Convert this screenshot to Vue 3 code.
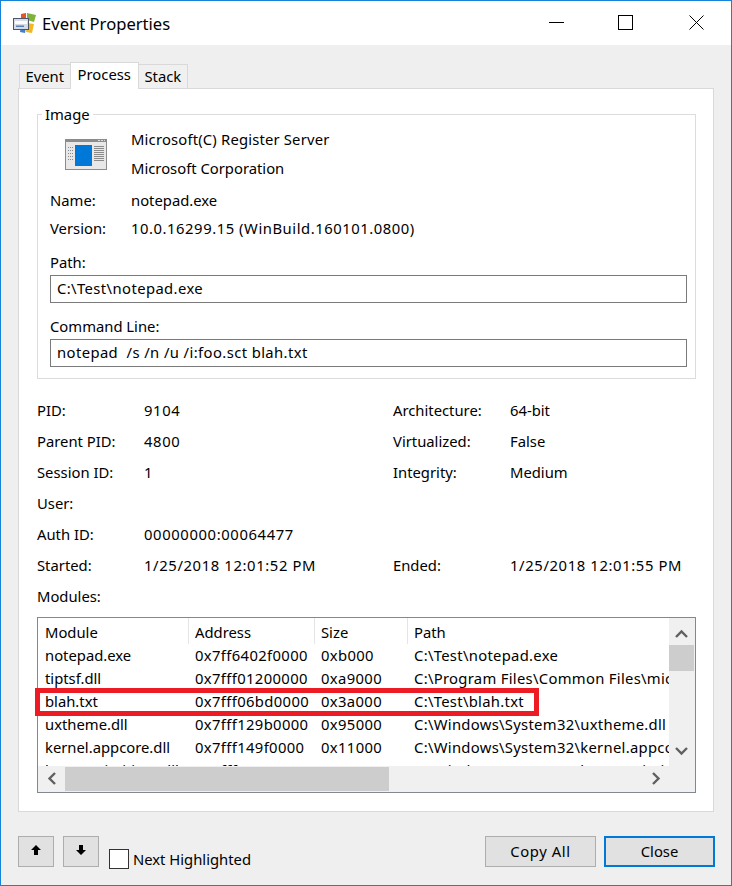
<template>
  <div class="window">
    <div class="titlebar">
      <svg class="app-icon" width="25" height="22" viewBox="0 0 25 22">
        <path d="M9 2 L14 1 L14 8 L9 9 Z" fill="#e2562b" />
        <path d="M15 1 L24 3 L22 10 L15 8 Z" fill="#7fb23a" />
        <path d="M9 13 L14 14 L13 21 L8 20 Z" fill="#3f7fd0" />
        <path d="M15 11 L22 12 L20 21 L14 20 Z" fill="#f2b824" />
        <rect x="1.5" y="6.5" width="15" height="11" fill="#d6dbe6" stroke="#4d5568" />
        <rect x="3" y="9" width="12" height="3" fill="#fff" />
        <rect x="4" y="13.5" width="8" height="1.5" fill="#5a7fb5" />
      </svg>
      <span class="title">Event Properties</span>
      <div class="controls">
        <button class="ctl">
          <svg width="15" height="15" viewBox="0 0 15 15"><path d="M0 7.5 H15" stroke="#000" /></svg>
        </button>
        <button class="ctl">
          <svg width="15" height="15" viewBox="0 0 15 15"><rect x="0.5" y="0.5" width="14" height="14" fill="none" stroke="#000" stroke-width="1" /></svg>
        </button>
        <button class="ctl">
          <svg width="15" height="15" viewBox="0 0 15 15"><path d="M0.5 0.5 L14.5 14.5 M14.5 0.5 L0.5 14.5" stroke="#000" stroke-width="1" /></svg>
        </button>
      </div>
    </div>

    <div class="tabs">
      <div v-for="t in tabs" :key="t" class="tab" :class="{ active: t === 'Process' }">{{ t }}</div>
    </div>

    <div class="panel">
      <fieldset class="group">
        <legend>Image</legend>
        <div class="image-head">
          <svg class="exe-icon" width="42" height="32" viewBox="0 0 42 32">
            <rect x="0" y="0" width="42" height="31" fill="#8c8c8c" />
            <rect x="1" y="3" width="40" height="27" fill="#e8e8e8" />
            <rect x="33" y="1" width="2" height="1" fill="#ddd" />
            <rect x="36" y="1" width="2" height="1" fill="#ddd" />
            <rect x="39" y="1" width="1" height="1" fill="#ddd" />
            <rect x="10" y="6" width="17" height="21" fill="#0078d7" />
            <path v-for="y in sideLines" :key="y" :d="'M3 ' + y + '.5 H8'" stroke="#8a8a8a" stroke-dasharray="1 1" />
            <path v-for="y in textLines" :key="y" :d="'M29 ' + y + '.5 H39'" stroke="#8a8a8a" />
          </svg>
          <div class="head-text">
            <div class="head-line">Microsoft(C) Register Server</div>
            <div class="head-line">Microsoft Corporation</div>
          </div>
        </div>
        <div class="kv"><span class="k">Name:</span><span>notepad.exe</span></div>
        <div class="kv version-row"><span class="k">Version:</span><span class="version">10.0.16299.15 (WinBuild.160101.0800)</span></div>
        <div class="field-label first">Path:</div>
        <div class="field">C:\Test\notepad.exe</div>
        <div class="field-label">Command Line:</div>
        <div class="field">notepad&nbsp; /s /n /u /i:foo.sct blah.txt</div>
      </fieldset>

      <div class="props">
        <template v-for="p in props" :key="p[0]">
          <span>{{ p[0] }}</span><span :class="{ num: isNumeric(p[1]) }">{{ p[1] }}</span><span>{{ p[2] }}</span><span :class="{ num: isNumeric(p[3]) }">{{ p[3] }}</span>
        </template>
      </div>
      <div class="modules-label">Modules:</div>

      <div class="list">
        <div class="rows">
          <div class="row head">
            <span v-for="c in columns" :key="c" class="cell">{{ c }}</span>
          </div>
          <div v-for="m in modules" :key="m[0]" class="row">
            <span v-for="(v, i) in m" :key="i" class="cell" :class="{ spaced: i > 0 && i < 3, 'path-cell': i === 3 }">{{ v }}</span>
          </div>
        </div>
        <div class="vbar">
          <svg width="25" height="27" viewBox="0 0 25 27"><path d="M7 19 L12.5 13.5 L18 19" fill="none" stroke="#606060" stroke-width="2.4" /></svg>
          <div class="vthumb"></div>
          <div class="grow"></div>
          <svg width="25" height="27" viewBox="0 0 25 27"><path d="M7 9 L12.5 14.5 L18 9" fill="none" stroke="#606060" stroke-width="2.4" /></svg>
        </div>
        <div class="hbar">
          <svg width="27" height="26" viewBox="0 0 27 26"><path d="M17 7 L11.5 12.5 L17 18" fill="none" stroke="#606060" stroke-width="2.4" /></svg>
          <div class="hthumb"></div>
          <div class="grow"></div>
          <svg width="27" height="26" viewBox="0 0 27 26"><path d="M11 7 L16.5 12.5 L11 18" fill="none" stroke="#606060" stroke-width="2.4" /></svg>
        </div>
        <div class="corner"></div>
        <div class="highlight"></div>
      </div>
    </div>

    <div class="footer">
      <button class="btn arrow">
        <svg width="10" height="11" viewBox="0 0 10 11"><path d="M5 0 L10 5 H7 V10 H3 V5 H0 Z" fill="#000" /></svg>
      </button>
      <button class="btn arrow">
        <svg width="10" height="11" viewBox="0 0 10 11"><path d="M3 0 H7 V5 H10 L5 10 L0 5 H3 Z" fill="#000" /></svg>
      </button>
      <label class="check"><span class="box"></span>Next Highlighted</label>
      <button class="btn wide push">Copy All</button>
      <button class="btn wide primary">Close</button>
    </div>
  </div>
</template>

<script setup>
const tabs = ['Event', 'Process', 'Stack']

const sideLines = [8, 11, 14, 17, 20]
const textLines = [7, 9, 11, 13, 15, 17, 19, 21]

const props = [
  ['PID:', '9104', 'Architecture:', '64-bit'],
  ['Parent PID:', '4800', 'Virtualized:', 'False'],
  ['Session ID:', '1', 'Integrity:', 'Medium'],
  ['User:', '', '', ''],
  ['Auth ID:', '00000000:00064477', '', ''],
  ['Started:', '1/25/2018 12:01:52 PM', 'Ended:', '1/25/2018 12:01:55 PM']
]

const columns = ['Module', 'Address', 'Size', 'Path']

const modules = [
  ['notepad.exe', '0x7ff6402f0000', '0xb000', 'C:\\Test\\notepad.exe'],
  ['tiptsf.dll', '0x7fff01200000', '0xa9000', 'C:\\Program Files\\Common Files\\microsoft shared\\ink\\tiptsf.dll'],
  ['blah.txt', '0x7fff06bd0000', '0x3a000', 'C:\\Test\\blah.txt'],
  ['uxtheme.dll', '0x7fff129b0000', '0x95000', 'C:\\Windows\\System32\\uxtheme.dll'],
  ['kernel.appcore.dll', '0x7fff149f0000', '0x11000', 'C:\\Windows\\System32\\kernel.appcore.dll'],
  ['bcryptprimitives.dll', '0x7fff14a10000', '0x5e000', 'C:\\Windows\\System32\\bcryptprimitives.dll']
]

// digits run wider in the original font
const isNumeric = (v) => /^\d[\d/:]*( |$)/.test(v)
</script>

<style>
body {
  margin: 0;
}
</style>

<style scoped>
.window {
  width: 732px;
  height: 886px;
  box-sizing: border-box;
  border: 1px solid #1783d8;
  background: #efefef;
  font-family: "Noto Sans", sans-serif;
  font-size: 14.8px;
  color: #000;
  overflow: hidden;
}

.titlebar {
  height: 44px;
  background: #fff;
  display: flex;
  align-items: center;
  padding-left: 11px;
}

.app-icon {
  margin-right: 5px;
}

.title {
  font-size: 16.6px;
}

.controls {
  margin-left: auto;
  display: flex;
}

.ctl {
  width: 71px;
  height: 44px;
  padding: 0 0 1px 2px;
  border: none;
  background: none;
  display: flex;
  align-items: center;
  justify-content: center;
}

.ctl:first-child {
  width: 67px;
}

.tabs {
  display: flex;
  height: 26px;
  margin-top: 17px;
  padding-left: 18px;
  align-items: flex-end;
  position: relative;
  z-index: 1;
}

.tab {
  height: 24px;
  line-height: 22px;
  box-sizing: border-box;
  padding: 0 5.5px;
  border: 1px solid #d9d9d9;
  border-bottom: none;
  margin-left: -1px;
  background: #f0f0f0;
}

.tab:first-child {
  margin-left: 0;
}

.tab.active {
  height: 27px;
  margin-bottom: -1px;
  line-height: 22px;
  background: #fff;
  padding: 0 7px;
}

.panel {
  width: 696px;
  height: 724px;
  box-sizing: border-box;
  margin-left: 17px;
  border: 1px solid #d9d9d9;
  background: #fff;
  padding: 0 18px;
}

.group {
  margin: 14px 0 0;
  padding: 0 8px 11px 12px;
  width: 659px;
  box-sizing: border-box;
  height: 276px;
  border: 1px solid #dcdcdc;
}

.group legend {
  padding: 0 3px;
  margin-left: -8px;
  line-height: 22px;
}

.image-head {
  display: flex;
  height: 61px;
}

.exe-icon {
  margin: 14px 0 0 15px;
}

.head-text {
  margin-left: 24px;
}

.head-line {
  line-height: 29px;
}

.head-line:first-child {
  letter-spacing: 0.18px;
}

.kv {
  display: flex;
  line-height: 29px;
}

.kv.version-row {
  line-height: 27px;
}

.k {
  width: 81px;
}

.version {
  letter-spacing: 0.55px;
}

.field-label {
  line-height: 21px;
  margin-top: 13px;
}

.field-label.first {
  margin-top: 10px;
}

.field {
  width: 637px;
  height: 28px;
  line-height: 25px;
  box-sizing: border-box;
  margin-top: 2px;
  padding: 0 6px;
  border: 1px solid #7a7a7a;
  letter-spacing: 0.4px;
}

.props {
  display: grid;
  grid-template-columns: 107px 249px 117px 1fr;
  grid-auto-rows: 31px;
  line-height: 31px;
  margin-top: 16px;
  width: 660px;
}

.num {
  letter-spacing: 0.62px;
}

.modules-label {
  line-height: 30px;
  margin-bottom: 6px;
}

.list {
  position: relative;
  width: 659px;
  height: 176px;
  box-sizing: border-box;
  border: 1px solid #828790;
  display: grid;
  grid-template-columns: 631px 26px;
  grid-template-rows: 148px 26px;
}

.rows {
  overflow: hidden;
  background: #fff;
}

.row {
  display: grid;
  grid-template-columns: 150px 126px 93px 1fr;
  height: 23px;
  box-sizing: border-box;
  padding-top: 1px;
  line-height: 20px;
  white-space: nowrap;
}

.row.head {
  height: 26.4px;
  padding-top: 0;
  line-height: 28px;
}

.cell {
  padding-left: 7px;
  overflow: hidden;
}

.cell.spaced {
  letter-spacing: 0.36px;
}

.cell.path-cell {
  letter-spacing: 0.3px;
}

.row.head .cell + .cell {
  border-left: 1px solid #e5e5e5;
  padding-left: 6px;
}

.vbar {
  background: #f0f0f0;
  display: flex;
  flex-direction: column;
}

.vthumb {
  width: 25px;
  height: 26px;
  background: #cdcdcd;
}

.grow {
  flex: 1;
}

.hbar {
  background: #f0f0f0;
  display: flex;
}

.hthumb {
  width: 324px;
  height: 24px;
  margin-top: 1px;
  background: #cdcdcd;
}

.corner {
  background: #f0f0f0;
}

.highlight {
  position: absolute;
  left: -3px;
  top: 70px;
  width: 504px;
  height: 28px;
  box-sizing: border-box;
  border: 5px solid #ed1c24;
}

.footer {
  display: flex;
  align-items: flex-start;
  margin-top: 24px;
  padding: 0 16px 0 17px;
}

.btn {
  height: 31px;
  box-sizing: border-box;
  padding: 0 0 2px;
  border: 1px solid #adadad;
  background: #e1e1e1;
  font: inherit;
  color: #000;
  display: flex;
  align-items: center;
  justify-content: center;
}

.btn.arrow {
  width: 36px;
  margin-right: 9px;
}

.btn.wide {
  width: 111px;
}

.btn.push {
  margin-left: auto;
  margin-right: 8px;
  letter-spacing: 0.6px;
}

.btn.primary {
  border: 2px solid #0078d7;
}

.check {
  display: flex;
  align-items: center;
  margin: 13px 0 0 1px;
  line-height: 18px;
  height: 20px;
}

.box {
  width: 20px;
  height: 20px;
  box-sizing: border-box;
  border: 1px solid #333;
  background: #fff;
  margin-right: 4px;
}
</style>
